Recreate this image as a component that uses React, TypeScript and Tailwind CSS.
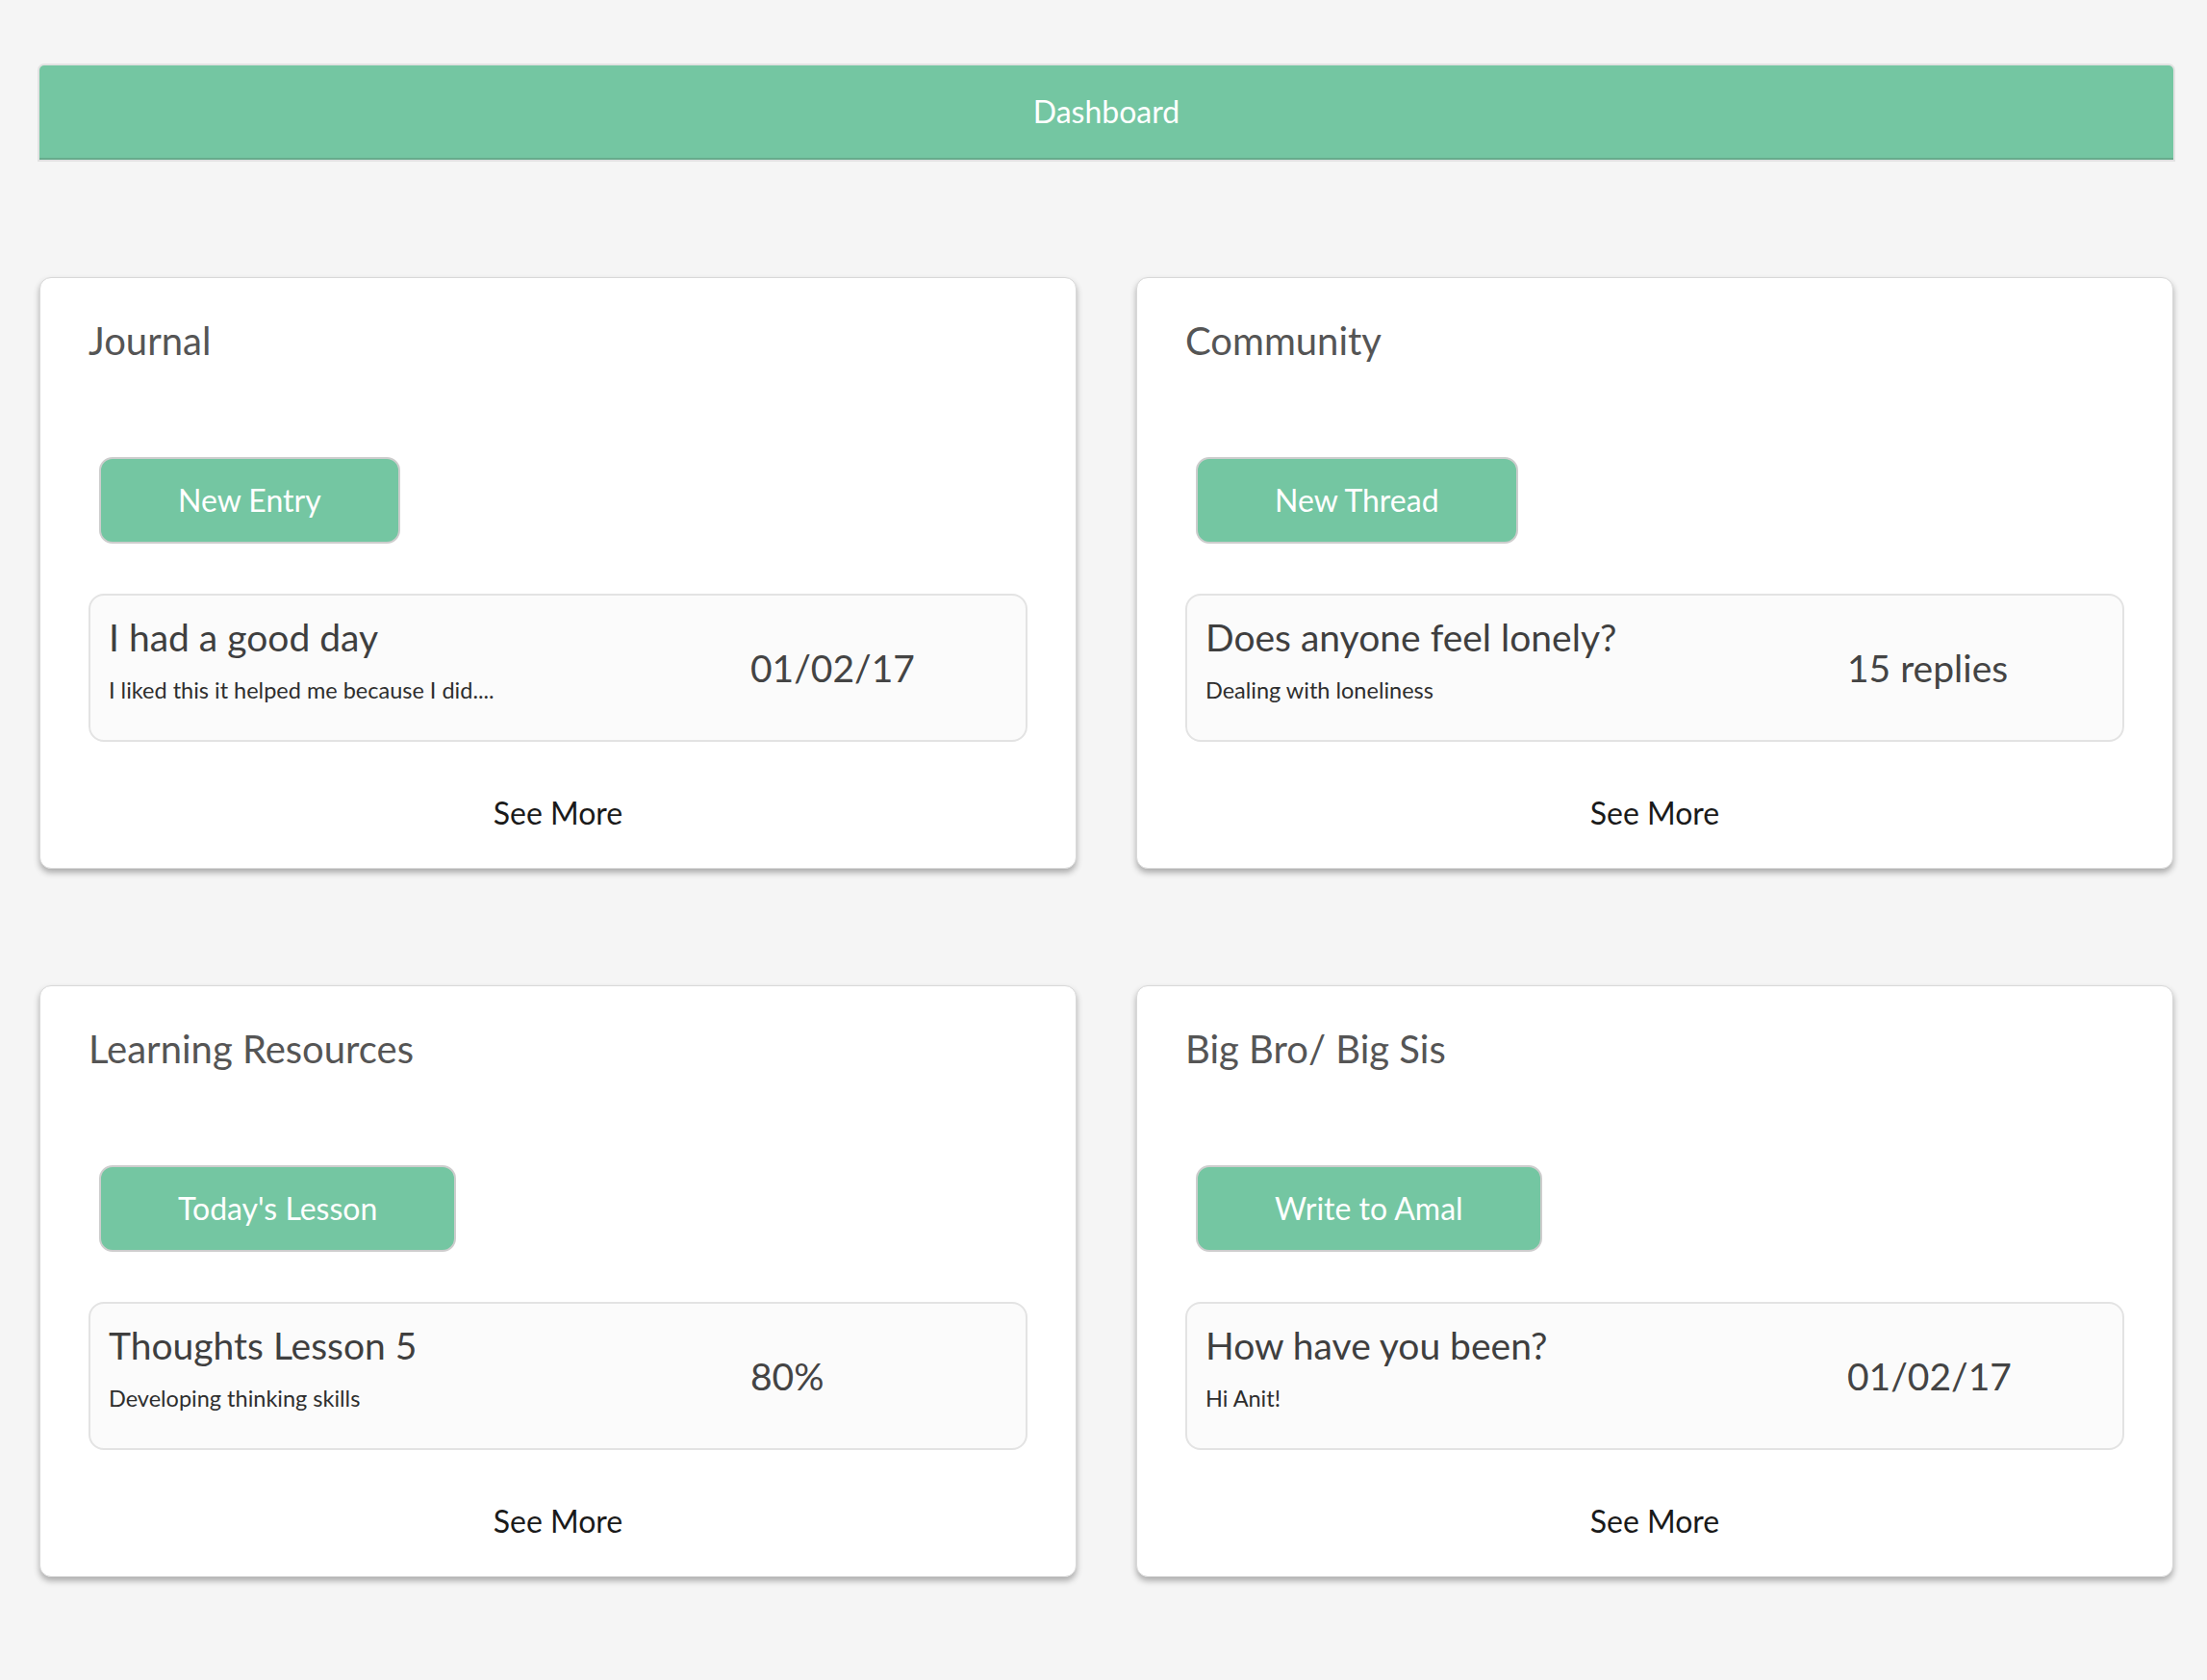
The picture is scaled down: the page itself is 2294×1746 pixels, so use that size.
import React from "react";

interface Panel { title: string; action: string; heading: string; sub: string; side: string; }

const panels: Panel[] = [
  { title: "Journal", action: "New Entry", heading: "I had a good day", sub: "I liked this it helped me because I did....", side: "01/02/17" },
  { title: "Community", action: "New Thread", heading: "Does anyone feel lonely?", sub: "Dealing with loneliness", side: "15 replies" },
  { title: "Learning Resources", action: "Today's Lesson", heading: "Thoughts Lesson 5", sub: "Developing thinking skills", side: "80%" },
  { title: "Big Bro/ Big Sis", action: "Write to Amal", heading: "How have you been?", sub: "Hi Anit!", side: "01/02/17" },
];

function Card({ p }: { p: Panel }) {
  return (
    <div className="bg-white border border-[#d8d8d8] rounded-[12px] shadow-[0_4px_6px_rgba(0,0,0,0.3)] px-[50px] pt-[41px] pb-[38px]">
      <h2 className="text-[40px] leading-[48px] text-[#555]">{p.title}</h2>
      <button className="mt-[97px] ml-[11px] h-[90px] px-[80px] rounded-[14px] bg-[#74c6a2] border-2 border-[#cdcdcd] text-white text-[32px] leading-[38px]">
        {p.action}
      </button>
      <div className="mt-[52px] h-[154px] flex bg-[#fbfbfb] border-2 border-[#e3e3e3] rounded-[16px]">
        <div className="w-[686px] pl-[19px] pt-[19px]">
          <div className="text-[39px] leading-[48px] text-[#3f3f3f]">{p.heading}</div>
          <div className="mt-[17px] text-[23.5px] leading-[29px] text-[#2e2e2e]">{p.sub}</div>
        </div>
        <div className="flex items-center text-[39px] leading-[48px] text-[#444]">{p.side}</div>
      </div>
      <div className="mt-[55px] text-center text-[32px] leading-[38px] text-[#1a1a1a]">See More</div>
    </div>
  );
}

export default function App() {
  return (
    <div className="min-h-screen bg-[#f5f5f5] font-['Lato',sans-serif] pt-[68px] pb-[100px]">
      <div className="ml-[41px] w-[2218px]">
        <div className="h-[98px] flex items-center justify-center bg-[#74c6a2] border-b-2 border-[#67ab8c] rounded-t-[5px] shadow-[0_0_0_2px_#e2e2e2] text-white text-[32px]">
          Dashboard
        </div>
        <div className="mt-[122px] grid grid-cols-2 gap-x-[62px] gap-y-[121px]">
          {panels.map(p => <Card key={p.title} p={p} />)}
        </div>
      </div>
    </div>
  );
}
